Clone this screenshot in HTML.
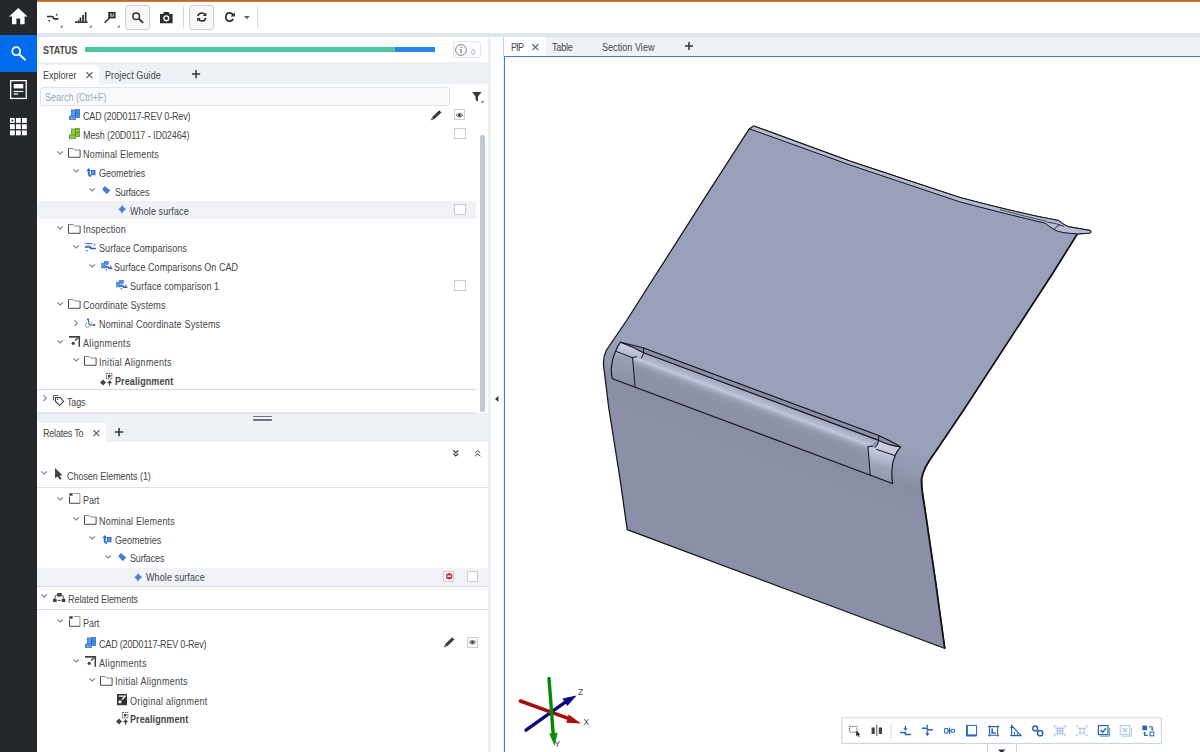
<!DOCTYPE html>
<html><head><meta charset="utf-8"><title>Inspector</title>
<style>
html,body{margin:0;padding:0;}
body{width:1200px;height:752px;overflow:hidden;position:relative;background:#eef1f6;font-family:"Liberation Sans",sans-serif;font-size:10px;color:#454545;}
div,span,svg{position:absolute;box-sizing:border-box;}
svg{overflow:visible;}
#side{left:0;top:0;width:37px;height:752px;background:#24272b;}
#side .sel{left:0;top:35px;width:37px;height:37px;background:#006cec;}
#topline{left:37px;top:0;width:1163px;height:2px;background:linear-gradient(#b55a17,#d98a4e);}
#toolbar{left:37px;top:2px;width:1163px;height:31px;background:#fff;}
#strip{left:37px;top:33px;width:1163px;height:4px;background:#dfe5ec;}
#left{left:37px;top:37px;width:451px;height:715px;background:#fff;}
#mid{left:491px;top:37px;width:12.5px;height:715px;background:#fff;}
#right{left:503px;top:37px;width:697px;height:715px;background:#eef1f6;}
.row{left:0;width:451px;height:18.9px;line-height:18.9px;white-space:nowrap;}
.t{transform:scaleX(.9);transform-origin:0 0;white-space:nowrap;line-height:12px;height:12px;}
.hl{background:#f0f2f7;width:438.6px;}
.hl2{background:#f0f2f7;}
.b{font-weight:bold;}
.tbbox{border:1px solid #c9d0da;border-radius:3px;background:#f7f8fa;}
.sep{width:1px;background:#d3d9e0;}
.tab{background:#fff;}
.cb{width:11.2px;height:11.2px;border:1px solid #cdcdcd;background:#fff;}
.hline{height:1px;background:#dde2e8;left:0;}
</style></head><body>
<div id="side"><div class="sel"></div>
<svg style="left:8.7px;top:7.5px" width="18.6" height="16.3" viewBox="0 0 18.6 16.3"><path d="M9.3 0 L18.6 8.6 H15.6 V16.3 H11.2 V10.6 H7.4 V16.3 H3 V8.6 H0 Z" fill="#fff"/></svg>
<svg style="left:11px;top:46px" width="15" height="15" viewBox="0 0 15 15"><circle cx="5.2" cy="5.2" r="4" fill="none" stroke="#fff" stroke-width="1.7"/><path d="M8.2 8.2 L14 13.8" stroke="#fff" stroke-width="2.1" stroke-linecap="round"/></svg>
<svg style="left:9.8px;top:80px" width="16.9" height="19.1" viewBox="0 0 16.9 19.1"><rect x="0.65" y="0.65" width="15.6" height="17.8" fill="none" stroke="#fff" stroke-width="1.3"/><rect x="3.7" y="4" width="9.6" height="4.4" fill="#fff"/><rect x="3.7" y="10.9" width="9.6" height="1.2" fill="#fff"/><rect x="3.7" y="13.4" width="4.5" height="1.3" fill="#fff"/></svg>
<svg style="left:9.8px;top:118px" width="16.8" height="17.3" viewBox="0 0 16.8 17.3"><g fill="#fff"><rect x="0" y="0" width="4.8" height="4.9"/><rect x="6" y="0" width="4.8" height="4.9"/><rect x="12" y="0" width="4.8" height="4.9"/><rect x="0" y="6.2" width="4.8" height="4.9"/><rect x="6" y="6.2" width="4.8" height="4.9"/><rect x="12" y="6.2" width="4.8" height="4.9"/><rect x="0" y="12.4" width="4.8" height="4.9"/><rect x="6" y="12.4" width="4.8" height="4.9"/><rect x="12" y="12.4" width="4.8" height="4.9"/></g><rect x="1.6" y="1.7" width="1.7" height="1.7" fill="#24272b"/></svg>
</div>
<div id="topline"></div>
<div id="toolbar">
<!-- icon1 compare -->
<svg style="left:9.9px;top:10.5px" width="12" height="9" viewBox="0 0 12 9"><path d="M0 3.5 H4.9 Q6 3.5 6.4 4.7 Q6.8 5.9 7.9 5.9 H11.4" fill="none" stroke="#2e2e2e" stroke-width="1.7"/><path d="M9 0.2 L10.9 2.4 H8.8 Z M0.8 7 H3 L2.6 9 Z" fill="#2e2e2e"/></svg>
<svg style="left:23.2px;top:23px" width="2.6" height="2.6" viewBox="0 0 3 3"><path d="M3 0 V3 H0 Z" fill="#555"/></svg>
<!-- icon2 bars -->
<svg style="left:38px;top:9.9px" width="12.6" height="11" viewBox="0 0 12.6 11"><path d="M0 10.2 H12.6" stroke="#2e2e2e" stroke-width="1.5"/><path d="M2 9.6 L4 7.6 V9.6 Z" fill="#2e2e2e"/><rect x="4.6" y="5.4" width="1.7" height="4.4" fill="#2e2e2e"/><rect x="7.2" y="3" width="1.7" height="6.8" fill="#2e2e2e"/><rect x="9.8" y="0" width="1.7" height="9.8" fill="#2e2e2e"/></svg>
<svg style="left:51.7px;top:23px" width="2.6" height="2.6" viewBox="0 0 3 3"><path d="M3 0 V3 H0 Z" fill="#555"/></svg>
<!-- icon3 flag -->
<svg style="left:66.5px;top:9.9px" width="11.6" height="11.4" viewBox="0 0 11.6 11.4"><rect x="4.2" y="0" width="7.4" height="6.4" fill="#2e2e2e"/><path d="M6 2.2 H8 M8.8 2.2 H10.2 M6 4 H10.2" stroke="#fff" stroke-width=".9"/><path d="M5.6 6 L0.6 10.8" stroke="#2e2e2e" stroke-width="1.5"/></svg>
<svg style="left:80px;top:23px" width="2.6" height="2.6" viewBox="0 0 3 3"><path d="M3 0 V3 H0 Z" fill="#555"/></svg>
<!-- search button -->
<div class="tbbox" style="left:88.4px;top:3.4px;width:24.2px;height:24.2px"></div>
<svg style="left:95px;top:10px" width="12" height="11.4" viewBox="0 0 12 11.4"><circle cx="4.2" cy="4.2" r="3.3" fill="none" stroke="#2e2e2e" stroke-width="1.5"/><path d="M6.6 6.6 L11.2 10.8" stroke="#2e2e2e" stroke-width="1.8"/></svg>
<!-- camera -->
<svg style="left:123px;top:9.9px" width="12.6" height="11.2" viewBox="0 0 12.6 11.2"><path d="M0 2 H3 L4 0 H8.6 L9.6 2 H12.6 V11.2 H0 Z" fill="#2e2e2e"/><circle cx="6.3" cy="6.3" r="3.1" fill="#fff"/><circle cx="6.3" cy="6.3" r="1.7" fill="#2e2e2e"/></svg>
<div class="sep" style="left:146px;top:4.2px;height:21.6px"></div>
<!-- refresh button -->
<div class="tbbox" style="left:152.4px;top:3.4px;width:24.4px;height:24.4px"></div>
<svg style="left:159.8px;top:10.4px" width="9.6" height="10" viewBox="0 0 9.6 10"><path d="M0.9 4.2 Q1.4 1 4.8 1 Q7 1 8 2.8" fill="none" stroke="#2e2e2e" stroke-width="1.6"/><path d="M9.4 0.4 V4 H5.8 Z" fill="#2e2e2e"/><path d="M8.7 5.8 Q8.2 9 4.8 9 Q2.6 9 1.6 7.2" fill="none" stroke="#2e2e2e" stroke-width="1.6"/><path d="M0.2 9.6 V6 H3.8 Z" fill="#2e2e2e"/></svg>
<!-- redo -->
<svg style="left:188px;top:10.4px" width="10" height="10" viewBox="0 0 10 10"><path d="M8.2 7 Q7 9.2 4.6 9.2 Q0.9 9.2 0.9 5 Q0.9 0.9 4.6 0.9 Q6.8 0.9 8 2.8" fill="none" stroke="#2e2e2e" stroke-width="1.7"/><path d="M9.9 0.2 V4.6 H5.6 Z" fill="#2e2e2e"/></svg>
<svg style="left:206.7px;top:13.8px" width="5.8" height="3.2" viewBox="0 0 5.8 3.2"><path d="M0 0 H5.8 L2.9 3.2 Z" fill="#5a6170"/></svg>
<div class="sep" style="left:220px;top:4.2px;height:21.6px"></div>
</div>
<div id="strip"></div>
<div id="left">
<!-- status -->
<span class="t" style="left:6px;top:8px;font-weight:bold;color:#4a4a4a;letter-spacing:-0.08px">STATUS</span>
<div style="left:48px;top:10px;width:310px;height:5px;background:#4cc6a2"></div>
<div style="left:358px;top:10px;width:39.8px;height:5px;background:#2a83ea"></div>
<div style="left:416px;top:4.4px;width:28.4px;height:16.2px;border:1px solid #e2e6ec;border-radius:2.5px;background:#fcfcfd"></div>
<svg style="left:418.2px;top:6.6px" width="12" height="12" viewBox="0 0 12 12"><circle cx="6" cy="6" r="5.4" fill="none" stroke="#777" stroke-width=".9"/><path d="M6 5 V9" stroke="#666" stroke-width="1.1"/><circle cx="6" cy="3.3" r=".75" fill="#666"/></svg>
<span class="t" style="left:433.6px;top:9px;color:#9db4cc;font-size:8.6px">0</span>
<!-- tab bar -->
<div style="left:0;top:25px;width:451px;height:22px;background:#eef1f6"></div>
<div class="tab" style="left:0;top:28.2px;width:62px;height:18.8px"></div>
<span class="t" style="left:6.4px;top:33px;letter-spacing:-0.003px">Explorer</span>
<svg style="left:48.8px;top:35.4px" width="6.8" height="6.4" viewBox="0 0 6.8 6.4"><path d="M0.4 0.3 L6.4 6.1 M6.4 0.3 L0.4 6.1" stroke="#5d6570" stroke-width="1.2"/></svg>
<span class="t" style="left:68.4px;top:33px;letter-spacing:0.117px">Project Guide</span>
<svg style="left:154.8px;top:33.2px" width="8.2" height="8.2" viewBox="0 0 8.2 8.2"><path d="M4.1 0 V8.2 M0 4.1 H8.2" stroke="#333" stroke-width="1.5"/></svg>
<!-- search -->
<div style="left:3.4px;top:50.2px;width:409.6px;height:18.8px;border:1px solid #dde2e9;border-radius:3px;background:#f8f9fb"></div>
<span class="t" style="left:7.6px;top:55px;color:#a3a9b2;letter-spacing:-0.019px">Search (Ctrl+F)</span>
<svg style="left:435px;top:55px" width="11.4" height="11" viewBox="0 0 11.4 11"><path d="M0 0 H9.6 L6 4.6 V9.6 L3.6 8 V4.6 Z" fill="#3a3a3a"/><path d="M11.4 8.2 V10.8 H8.8 Z" fill="#555"/></svg>
<!-- pencil & eye row CAD -->
<svg style="left:394px;top:72.6px" width="10.6" height="10.4" viewBox="0 0 10.6 10.4"><path d="M8.2 0.2 L10.4 2.4 L3 9.4 L0.8 7.4 Z" fill="#3a3a3a"/><path d="M0.5 8 L2.5 9.8 L0.1 10.3 Z" fill="#3a3a3a"/></svg>
<div class="cb" style="left:417.2px;top:72.2px"></div>
<svg style="left:419.4px;top:75.6px" width="7" height="4.4" viewBox="0 0 7 4.4"><path d="M0.2 2.2 Q3.5 -1.4 6.8 2.2 Q3.5 5.8 0.2 2.2 Z" fill="none" stroke="#333" stroke-width=".8"/><circle cx="3.5" cy="2.2" r="1.3" fill="#333"/></svg>
<div class="cb" style="left:417.4px;top:91.2px"></div>
<div class="cb" style="left:417.4px;top:167.2px;z-index:2"></div>
<div class="cb" style="left:417.4px;top:242.6px"></div>
<!-- scrollbar -->
<div style="left:443.4px;top:98px;width:4.4px;height:277.4px;background:#c4c9d1;border-radius:2.2px"></div>
<!-- separators -->
<div class="hline" style="top:351.8px;width:438.6px;background:#d4dae1"></div>
<!-- splitter & relates tab bar -->
<div style="left:0;top:375.5px;width:451px;height:29.2px;background:#eef1f6"></div>
<div style="left:0;top:375.3px;width:438.6px;height:1.8px;background:#e3e7ed"></div>
<div style="left:215.8px;top:378.8px;width:19.2px;height:1.5px;background:#6b7483;border-radius:.7px"></div>
<div style="left:215.8px;top:382.1px;width:19.2px;height:1.5px;background:#6b7483;border-radius:.7px"></div>
<div class="tab" style="left:0;top:385.8px;width:69px;height:19px"></div>
<span class="t" style="left:6.4px;top:391px;letter-spacing:-0.219px">Relates To</span>
<svg style="left:55.6px;top:392.6px" width="6.8" height="6.4" viewBox="0 0 6.8 6.4"><path d="M0.4 0.3 L6.4 6.1 M6.4 0.3 L0.4 6.1" stroke="#5d6570" stroke-width="1.2"/></svg>
<svg style="left:78px;top:390.6px" width="8.2" height="8.2" viewBox="0 0 8.2 8.2"><path d="M4.1 0 V8.2 M0 4.1 H8.2" stroke="#333" stroke-width="1.5"/></svg>
<!-- double chevrons -->
<svg style="left:415.8px;top:413.2px" width="5.6" height="6.6" viewBox="0 0 5.6 6.6"><path d="M0.3 0.4 L2.8 2.8 L5.3 0.4 M0.3 3.6 L2.8 6 L5.3 3.6" fill="none" stroke="#333" stroke-width="1.2"/></svg>
<svg style="left:437.8px;top:413.2px" width="5.6" height="6.6" viewBox="0 0 5.6 6.6"><path d="M0.3 3 L2.8 0.6 L5.3 3 M0.3 6.2 L2.8 3.8 L5.3 6.2" fill="none" stroke="#333" stroke-width="1"/></svg>
<div class="hline" style="top:449.6px;width:451px"></div>
<div class="hline" style="top:549px;width:451px"></div>
<div class="hline" style="top:572px;width:451px"></div>
<!-- relates row controls -->
<div class="cb" style="left:406px;top:534.2px;z-index:2;width:11.4px;height:10.6px"></div>
<svg style="left:408.6px;top:536.4px;z-index:3" width="6.4" height="6.4" viewBox="0 0 6.4 6.4"><circle cx="3.2" cy="3.2" r="3.2" fill="#c8333d"/><rect x="1.4" y="2.5" width="3.6" height="1.4" fill="#fff"/></svg>
<div class="cb" style="left:429.8px;top:534.2px;z-index:2;height:10.6px"></div>
<svg style="left:406.8px;top:600px" width="10.6" height="10.4" viewBox="0 0 10.6 10.4"><path d="M8.2 0.2 L10.4 2.4 L3 9.4 L0.8 7.4 Z" fill="#3a3a3a"/><path d="M0.5 8 L2.5 9.8 L0.1 10.3 Z" fill="#3a3a3a"/></svg>
<div class="cb" style="left:429.8px;top:600px;height:10.8px"></div>
<svg style="left:432px;top:603.2px" width="7" height="4.4" viewBox="0 0 7 4.4"><path d="M0.2 2.2 Q3.5 -1.4 6.8 2.2 Q3.5 5.8 0.2 2.2 Z" fill="none" stroke="#333" stroke-width=".8"/><circle cx="3.5" cy="2.2" r="1.3" fill="#333"/></svg>
<div style="left:0;top:163.9px;width:438.6px;height:17.7px;background:#f0f2f7"></div>
<div style="left:0;top:530.7px;width:451px;height:18.3px;background:#f0f2f7"></div>
<svg style="left:32px;top:72.25px" width="11" height="11" viewBox="0 0 11 11"><rect x="2.3" y="1" width="4.4" height="6" fill="#5d9cea" stroke="#2f6cc6" stroke-width=".7"/><rect x="6.5" y="0.4" width="4.1" height="3.9" fill="#4d8ce0" stroke="#2f6cc6" stroke-width=".7"/><rect x="6.7" y="4.3" width="4" height="4.1" fill="#4d8ce0" stroke="#2f6cc6" stroke-width=".7"/><rect x="0.4" y="7" width="6.2" height="3.7" fill="#5d9cea" stroke="#2f6cc6" stroke-width=".7"/></svg><span class="t" style="left:45.9px;top:74px;letter-spacing:-0.197px">CAD (20D0117-REV 0-Rev)</span>
<svg style="left:32px;top:91.35px" width="11" height="11" viewBox="0 0 11 11"><rect x="2.3" y="1" width="4.4" height="6" fill="#94cf48" stroke="#4f8e22" stroke-width=".7"/><rect x="6.5" y="0.4" width="4.1" height="3.9" fill="#86c43c" stroke="#4f8e22" stroke-width=".7"/><rect x="6.7" y="4.3" width="4" height="4.1" fill="#86c43c" stroke="#4f8e22" stroke-width=".7"/><rect x="0.4" y="7" width="6.2" height="3.7" fill="#94cf48" stroke="#4f8e22" stroke-width=".7"/></svg><span class="t" style="left:45.9px;top:93px;letter-spacing:-0.092px">Mesh (20D0117 - ID02464)</span>
<svg style="left:20.1px;top:113.55px" width="6.4" height="3.7" viewBox="0 0 6.4 3.7"><path d="M0.4 0.4 L3.2 3.1 L6 0.4" fill="none" stroke="#6e7886" stroke-width="1.05"/></svg><svg style="left:31.3px;top:111.05px" width="12.6" height="9.8" viewBox="0 0 12.6 9.8"><path d="M0.5 0.5 H5 L6.6 2 H12.1" fill="none" stroke="#8a8a8a" stroke-width="1"/><path d="M0.5 0.5 V9.3 H12.1 V2" fill="none" stroke="#454545" stroke-width="1"/></svg><span class="t" style="left:45.9px;top:112px;letter-spacing:0.206px">Nominal Elements</span>
<svg style="left:35.7px;top:132.45px" width="6.4" height="3.7" viewBox="0 0 6.4 3.7"><path d="M0.4 0.4 L3.2 3.1 L6 0.4" fill="none" stroke="#6e7886" stroke-width="1.05"/></svg><svg style="left:48.8px;top:130.5px" width="9.4" height="9.4" viewBox="0 0 9.4 9.4"><path d="M2.9 0 L5 3 H3.7 V5.2 Q3.7 6.8 5.2 7.4 L4.4 9.2 Q1.7 8.2 1.7 5.2 V3 H0.3 Z" fill="#2f6ec8"/><rect x="5.4" y="2.4" width="3.6" height="4.4" fill="#5b95e6" stroke="#2a62be" stroke-width=".9"/></svg><span class="t" style="left:61.6px;top:131px;letter-spacing:-0.03px">Geometries</span>
<svg style="left:51.6px;top:151.35px" width="6.4" height="3.7" viewBox="0 0 6.4 3.7"><path d="M0.4 0.4 L3.2 3.1 L6 0.4" fill="none" stroke="#6e7886" stroke-width="1.05"/></svg><svg style="left:64.9px;top:149.4px" width="8.4" height="8.4" viewBox="0 0 8.4 8.4"><path d="M2.7 0.1 L8.3 4.6 L4.8 8.3 L0.1 3.3 Z" fill="#4a82d4"/><path d="M4.5 1.6 L2.1 5.2 M6.4 3.2 L3.8 6.9" stroke="#356cc2" stroke-width=".6"/></svg><span class="t" style="left:77.5px;top:150px;letter-spacing:-0.177px">Surfaces</span>
<svg style="left:80.8px;top:168.3px" width="8.2" height="8.4" viewBox="0 0 8.2 8.4"><path d="M4.2 0 Q5.2 2.6 8.2 4.2 Q5.4 5.4 3.9 8.4 Q2.8 5.6 0 4.2 Q2.8 3 4.2 0 Z" fill="#4a82d4"/></svg><span class="t" style="left:93.1px;top:169px;letter-spacing:0.104px">Whole surface</span>
<svg style="left:20.1px;top:189.15px" width="6.4" height="3.7" viewBox="0 0 6.4 3.7"><path d="M0.4 0.4 L3.2 3.1 L6 0.4" fill="none" stroke="#6e7886" stroke-width="1.05"/></svg><svg style="left:31.3px;top:186.65px" width="12.6" height="9.8" viewBox="0 0 12.6 9.8"><path d="M0.5 0.5 H5 L6.6 2 H12.1" fill="none" stroke="#8a8a8a" stroke-width="1"/><path d="M0.5 0.5 V9.3 H12.1 V2" fill="none" stroke="#454545" stroke-width="1"/></svg><span class="t" style="left:45.9px;top:187px;letter-spacing:0.207px">Inspection</span>
<svg style="left:35.9px;top:208.05px" width="6.4" height="3.7" viewBox="0 0 6.4 3.7"><path d="M0.4 0.4 L3.2 3.1 L6 0.4" fill="none" stroke="#6e7886" stroke-width="1.05"/></svg><svg style="left:48px;top:205.05px" width="10.8" height="9.9" viewBox="0 0 10.8 9.9"><path d="M0.2 1.6 H7.6" stroke="#2a5cb2" stroke-width=".9" fill="none"/><path d="M1.4 3.4 H5" stroke="#7ea3dc" stroke-width=".7" fill="none"/><path d="M0 5.1 H5.6 V6.6 H10.8" fill="none" stroke="#2a5cb2" stroke-width="1.5"/><path d="M9 1.4 L10.7 3.6 H8.8 Z" fill="#2a5cb2"/><path d="M0.6 8 H2.8 L2 9.8 Z" fill="#2a5cb2"/></svg><span class="t" style="left:61.5px;top:206px;letter-spacing:0.079px">Surface Comparisons</span>
<svg style="left:51.6px;top:226.95px" width="6.4" height="3.7" viewBox="0 0 6.4 3.7"><path d="M0.4 0.4 L3.2 3.1 L6 0.4" fill="none" stroke="#6e7886" stroke-width="1.05"/></svg><svg style="left:63.6px;top:224.35px" width="11.6" height="10.2" viewBox="0 0 11.6 10.2"><rect x="0.6" y="2.2" width="3.2" height="4.8" fill="#5a9aec" stroke="#2f6cc6" stroke-width=".5"/><rect x="3.4" y="0.3" width="4" height="3.2" fill="#4a8ae2" stroke="#2f6cc6" stroke-width=".5"/><rect x="3.8" y="3.5" width="2.6" height="1.6" fill="#7fb2f2"/><path d="M4 5.9 H7.2 L7.8 7.2 H11.4" fill="none" stroke="#2a5cb2" stroke-width="1.5"/><path d="M8.6 6.2 L9.8 4.4 L10.8 6.2 Z" fill="#2a5cb2"/><path d="M4.4 8 H6 L5.2 10.1 Z" fill="#2a5cb2"/></svg><span class="t" style="left:77.4px;top:225px;letter-spacing:0.07px">Surface Comparisons On CAD</span>
<svg style="left:79.2px;top:242.75px" width="11.6" height="10.2" viewBox="0 0 11.6 10.2"><rect x="0.6" y="2.2" width="3.2" height="4.8" fill="#5a9aec" stroke="#2f6cc6" stroke-width=".5"/><rect x="3.4" y="0.3" width="4" height="3.2" fill="#4a8ae2" stroke="#2f6cc6" stroke-width=".5"/><rect x="3.8" y="3.5" width="2.6" height="1.6" fill="#7fb2f2"/><path d="M4 5.9 H7.2 L7.8 7.2 H11.4" fill="none" stroke="#2a5cb2" stroke-width="1.5"/><path d="M8.6 6.2 L9.8 4.4 L10.8 6.2 Z" fill="#2a5cb2"/><path d="M4.4 8 H6 L5.2 10.1 Z" fill="#2a5cb2"/></svg><span class="t" style="left:93px;top:244px;letter-spacing:0.091px">Surface comparison 1</span>
<svg style="left:20.1px;top:264.75px" width="6.4" height="3.7" viewBox="0 0 6.4 3.7"><path d="M0.4 0.4 L3.2 3.1 L6 0.4" fill="none" stroke="#6e7886" stroke-width="1.05"/></svg><svg style="left:31.3px;top:262.05px" width="12.6" height="9.8" viewBox="0 0 12.6 9.8"><path d="M0.5 0.5 H5 L6.6 2 H12.1" fill="none" stroke="#8a8a8a" stroke-width="1"/><path d="M0.5 0.5 V9.3 H12.1 V2" fill="none" stroke="#454545" stroke-width="1"/></svg><span class="t" style="left:45.9px;top:263px;letter-spacing:0.09px">Coordinate Systems</span>
<svg style="left:37.4px;top:282.6px" width="3.8" height="6.4" viewBox="0 0 3.8 6.4"><path d="M0.5 0.4 L3.2 3.2 L0.5 6" fill="none" stroke="#6e7886" stroke-width="1.05"/></svg><svg style="left:47.9px;top:281.1px" width="10.8" height="10.2" viewBox="0 0 10.8 10.2"><path d="M2.8 0.6 L4.4 7 H9.6" fill="none" stroke="#2a5cb2" stroke-width="1.1"/><path d="M8.6 5.4 L10.8 7 L8.6 8.6 Z" fill="#2a5cb2"/><path d="M1.8 2.2 L3 0 L4.2 1.8 Z" fill="#2a5cb2"/><path d="M2 4.8 Q-0.4 6.8 1.4 9 Q2.6 10 4 8.2" fill="none" stroke="#2a5cb2" stroke-width="1" stroke-dasharray="1.3 .9"/><circle cx="6.6" cy="5" r=".6" fill="#2a5cb2"/></svg><span class="t" style="left:61.7px;top:282px;letter-spacing:0.201px">Nominal Coordinate Systems</span>
<svg style="left:20.0px;top:302.55px" width="6.4" height="3.7" viewBox="0 0 6.4 3.7"><path d="M0.4 0.4 L3.2 3.1 L6 0.4" fill="none" stroke="#6e7886" stroke-width="1.05"/></svg><svg style="left:32px;top:299.0px" width="11.1" height="10.9" viewBox="0 0 11.1 10.9"><path d="M0 0.85 H11.1" stroke="#404040" stroke-width="1.7"/><path d="M10.3 0.2 V10.9" stroke="#404040" stroke-width="1.5"/><path d="M6 4.6 L9.6 1.6" stroke="#404040" stroke-width="1.3"/><circle cx="4.2" cy="7.3" r="1.6" fill="#404040"/></svg><span class="t" style="left:46.1px;top:301px;letter-spacing:0.353px">Alignments</span>
<svg style="left:35.8px;top:321.45px" width="6.4" height="3.7" viewBox="0 0 6.4 3.7"><path d="M0.4 0.4 L3.2 3.1 L6 0.4" fill="none" stroke="#6e7886" stroke-width="1.05"/></svg><svg style="left:47.2px;top:319.15px" width="12.6" height="9.8" viewBox="0 0 12.6 9.8"><path d="M0.5 0.5 H5 L6.6 2 H12.1" fill="none" stroke="#8a8a8a" stroke-width="1"/><path d="M0.5 0.5 V9.3 H12.1 V2" fill="none" stroke="#454545" stroke-width="1"/></svg><span class="t" style="left:61.6px;top:320px;letter-spacing:0.331px">Initial Alignments</span>
<svg style="left:63px;top:335.9px" width="12.6" height="12.6" viewBox="0 0 12.6 12.6"><rect x="6.5" y="0.5" width="5.4" height="5.4" fill="none" stroke="#3a3a3a" stroke-width=".9" stroke-dasharray="1.4 .9"/><rect x="8" y="2" width="2.4" height="2.4" fill="#3a3a3a"/><path d="M3 6.5 L6 9.5 L3 12.5 L0 9.5 Z" fill="#404040"/><path d="M9.6 7 L11.2 9.2 L12.6 9.6 L11.2 10.2 H10.2 V12.6 H9 V10.2 H8 L6.6 9.6 L8 9.2 Z" fill="#404040"/></svg><span class="t b" style="left:77.8px;top:339px;letter-spacing:0.118px">Prealignment</span>
<svg style="left:5.8px;top:358.4px" width="3.8" height="6.4" viewBox="0 0 3.8 6.4"><path d="M0.5 0.4 L3.2 3.2 L0.5 6" fill="none" stroke="#6e7886" stroke-width="1.05"/></svg><svg style="left:16.2px;top:358.1px" width="11.1" height="10.8" viewBox="0 0 11.1 10.8"><path d="M0.5 5.4 V0.5 H5.4" fill="none" stroke="#4a4a4a" stroke-width=".9"/><path d="M2.4 2.4 H7.4 L10.6 6.4 L6.6 10.3 L2.4 6.2 Z" fill="#fff" stroke="#383838" stroke-width="1.05"/><circle cx="4.5" cy="4.3" r=".75" fill="#383838"/></svg><span class="t" style="left:30.4px;top:360px;letter-spacing:-0.198px">Tags</span>
<svg style="left:4.4px;top:433.5px" width="6.4" height="3.7" viewBox="0 0 6.4 3.7"><path d="M0.4 0.4 L3.2 3.1 L6 0.4" fill="none" stroke="#6e7886" stroke-width="1.05"/></svg><svg style="left:18px;top:431.3px" width="7.5" height="11.7" viewBox="0 0 7.5 11.7"><path d="M0 0 L7.5 7.2 L4.5 7.5 L6.6 10.8 L5.1 11.7 L2.4 8.4 L0 10.5 Z" fill="#444"/></svg><span class="t" style="left:30.4px;top:434px;letter-spacing:-0.043px">Chosen Elements (1)</span>
<svg style="left:20.2px;top:459.5px" width="6.4" height="3.7" viewBox="0 0 6.4 3.7"><path d="M0.4 0.4 L3.2 3.1 L6 0.4" fill="none" stroke="#6e7886" stroke-width="1.05"/></svg><svg style="left:31.8px;top:455.9px" width="11.4" height="10.8" viewBox="0 0 11.4 10.8"><path d="M4.6 0.5 H10.9 V10.3" fill="none" stroke="#9a9a9a" stroke-width="1"/><path d="M0.5 3.4 V10.3 H10.9" fill="none" stroke="#454545" stroke-width="1"/><rect x="0.3" y="0.3" width="3.3" height="2.4" fill="#3a3a3a"/></svg><span class="t" style="left:45.9px;top:458px;letter-spacing:-0.072px">Part</span>
<svg style="left:35.8px;top:480.3px" width="6.4" height="3.7" viewBox="0 0 6.4 3.7"><path d="M0.4 0.4 L3.2 3.1 L6 0.4" fill="none" stroke="#6e7886" stroke-width="1.05"/></svg><svg style="left:47.2px;top:478.2px" width="12.6" height="9.8" viewBox="0 0 12.6 9.8"><path d="M0.5 0.5 H5 L6.6 2 H12.1" fill="none" stroke="#8a8a8a" stroke-width="1"/><path d="M0.5 0.5 V9.3 H12.1 V2" fill="none" stroke="#454545" stroke-width="1"/></svg><span class="t" style="left:61.9px;top:479px;letter-spacing:0.206px">Nominal Elements</span>
<svg style="left:51.8px;top:499.4px" width="6.4" height="3.7" viewBox="0 0 6.4 3.7"><path d="M0.4 0.4 L3.2 3.1 L6 0.4" fill="none" stroke="#6e7886" stroke-width="1.05"/></svg><svg style="left:64.8px;top:497.6px" width="9.4" height="9.4" viewBox="0 0 9.4 9.4"><path d="M2.9 0 L5 3 H3.7 V5.2 Q3.7 6.8 5.2 7.4 L4.4 9.2 Q1.7 8.2 1.7 5.2 V3 H0.3 Z" fill="#2f6ec8"/><rect x="5.4" y="2.4" width="3.6" height="4.4" fill="#5b95e6" stroke="#2a62be" stroke-width=".9"/></svg><span class="t" style="left:77.8px;top:498px;letter-spacing:-0.03px">Geometries</span>
<svg style="left:67.6px;top:518.0px" width="6.4" height="3.7" viewBox="0 0 6.4 3.7"><path d="M0.4 0.4 L3.2 3.1 L6 0.4" fill="none" stroke="#6e7886" stroke-width="1.05"/></svg><svg style="left:80.6px;top:516.3px" width="8.4" height="8.4" viewBox="0 0 8.4 8.4"><path d="M2.7 0.1 L8.3 4.6 L4.8 8.3 L0.1 3.3 Z" fill="#4a82d4"/><path d="M4.5 1.6 L2.1 5.2 M6.4 3.2 L3.8 6.9" stroke="#356cc2" stroke-width=".6"/></svg><span class="t" style="left:93.2px;top:516px;letter-spacing:-0.177px">Surfaces</span>
<svg style="left:96.7px;top:535.5px" width="8.2" height="8.4" viewBox="0 0 8.2 8.4"><path d="M4.2 0 Q5.2 2.6 8.2 4.2 Q5.4 5.4 3.9 8.4 Q2.8 5.6 0 4.2 Q2.8 3 4.2 0 Z" fill="#4a82d4"/></svg><span class="t" style="left:108.6px;top:535px;letter-spacing:0.104px">Whole surface</span>
<svg style="left:4.4px;top:556.6px" width="6.4" height="3.7" viewBox="0 0 6.4 3.7"><path d="M0.4 0.4 L3.2 3.1 L6 0.4" fill="none" stroke="#6e7886" stroke-width="1.05"/></svg><svg style="left:15.9px;top:556.2px" width="12.3" height="9" viewBox="0 0 12.3 9"><rect x="4.2" y="0" width="4.5" height="3.6" fill="#404040"/><rect x="0" y="5.7" width="3.6" height="3.3" fill="#404040"/><rect x="8.7" y="5.7" width="3.6" height="3.3" fill="#404040"/><path d="M1.8 5.7 Q1.8 1.8 4.2 1.8 M8.7 1.8 Q10.5 1.8 10.5 5.7" fill="none" stroke="#404040" stroke-width=".9"/><path d="M4.6 7.4 H7.8" stroke="#404040" stroke-width="1"/></svg><span class="t" style="left:30.6px;top:557px;letter-spacing:-0.072px">Related Elements</span>
<svg style="left:20.2px;top:582.45px" width="6.4" height="3.7" viewBox="0 0 6.4 3.7"><path d="M0.4 0.4 L3.2 3.1 L6 0.4" fill="none" stroke="#6e7886" stroke-width="1.05"/></svg><svg style="left:31.8px;top:578.75px" width="11.4" height="10.8" viewBox="0 0 11.4 10.8"><path d="M4.6 0.5 H10.9 V10.3" fill="none" stroke="#9a9a9a" stroke-width="1"/><path d="M0.5 3.4 V10.3 H10.9" fill="none" stroke="#454545" stroke-width="1"/><rect x="0.3" y="0.3" width="3.3" height="2.4" fill="#3a3a3a"/></svg><span class="t" style="left:45.9px;top:581px;letter-spacing:-0.072px">Part</span>
<svg style="left:48px;top:599.95px" width="11" height="11" viewBox="0 0 11 11"><rect x="2.3" y="1" width="4.4" height="6" fill="#5d9cea" stroke="#2f6cc6" stroke-width=".7"/><rect x="6.5" y="0.4" width="4.1" height="3.9" fill="#4d8ce0" stroke="#2f6cc6" stroke-width=".7"/><rect x="6.7" y="4.3" width="4" height="4.1" fill="#4d8ce0" stroke="#2f6cc6" stroke-width=".7"/><rect x="0.4" y="7" width="6.2" height="3.7" fill="#5d9cea" stroke="#2f6cc6" stroke-width=".7"/></svg><span class="t" style="left:61.9px;top:602px;letter-spacing:-0.197px">CAD (20D0117-REV 0-Rev)</span>
<svg style="left:35.8px;top:622.4px" width="6.4" height="3.7" viewBox="0 0 6.4 3.7"><path d="M0.4 0.4 L3.2 3.1 L6 0.4" fill="none" stroke="#6e7886" stroke-width="1.05"/></svg><svg style="left:48px;top:618.9px" width="11.1" height="10.9" viewBox="0 0 11.1 10.9"><path d="M0 0.85 H11.1" stroke="#404040" stroke-width="1.7"/><path d="M10.3 0.2 V10.9" stroke="#404040" stroke-width="1.5"/><path d="M6 4.6 L9.6 1.6" stroke="#404040" stroke-width="1.3"/><circle cx="4.2" cy="7.3" r="1.6" fill="#404040"/></svg><span class="t" style="left:61.9px;top:621px;letter-spacing:0.353px">Alignments</span>
<svg style="left:51.8px;top:641.1px" width="6.4" height="3.7" viewBox="0 0 6.4 3.7"><path d="M0.4 0.4 L3.2 3.1 L6 0.4" fill="none" stroke="#6e7886" stroke-width="1.05"/></svg><svg style="left:62.9px;top:638.6px" width="12.6" height="9.8" viewBox="0 0 12.6 9.8"><path d="M0.5 0.5 H5 L6.6 2 H12.1" fill="none" stroke="#8a8a8a" stroke-width="1"/><path d="M0.5 0.5 V9.3 H12.1 V2" fill="none" stroke="#454545" stroke-width="1"/></svg><span class="t" style="left:77.8px;top:639px;letter-spacing:0.331px">Initial Alignments</span>
<svg style="left:80px;top:656.75px" width="10" height="11.2" viewBox="0 0 10 11.2"><rect x="0" y="0" width="10" height="11.2" fill="#333"/><path d="M1.8 2.2 H8.2 L5 5.6" fill="none" stroke="#fff" stroke-width="1.3"/><circle cx="3" cy="7.8" r="1.6" fill="#fff"/></svg><span class="t" style="left:93.2px;top:659px;letter-spacing:0.306px">Original alignment</span>
<svg style="left:79px;top:674.9px" width="12.6" height="12.6" viewBox="0 0 12.6 12.6"><rect x="6.5" y="0.5" width="5.4" height="5.4" fill="none" stroke="#3a3a3a" stroke-width=".9" stroke-dasharray="1.4 .9"/><rect x="8" y="2" width="2.4" height="2.4" fill="#3a3a3a"/><path d="M3 6.5 L6 9.5 L3 12.5 L0 9.5 Z" fill="#404040"/><path d="M9.6 7 L11.2 9.2 L12.6 9.6 L11.2 10.2 H10.2 V12.6 H9 V10.2 H8 L6.6 9.6 L8 9.2 Z" fill="#404040"/></svg><span class="t b" style="left:93.2px;top:677px;letter-spacing:0.118px">Prealignment</span>
</div>
<div id="mid"><svg style="left:4.2px;top:358.6px" width="3.4" height="5.8" viewBox="0 0 3.4 5.8"><path d="M3.4 0 V5.8 L0 2.9 Z" fill="#2e2e2e"/></svg></div>
<div id="right">
<div style="left:0;top:0;width:1px;height:19px;background:#c9d0d8"></div>
<div class="tab" style="left:1px;top:0;width:42px;height:19px"></div>
<span class="t" style="left:7.6px;top:5px;letter-spacing:-0.838px">PIP</span>
<svg style="left:28.8px;top:6.6px" width="6.8" height="6.4" viewBox="0 0 6.8 6.4"><path d="M0.4 0.3 L6.4 6.1 M6.4 0.3 L0.4 6.1" stroke="#5d6570" stroke-width="1.2"/></svg>
<span class="t" style="left:49.4px;top:5px;letter-spacing:-0.181px">Table</span>
<span class="t" style="left:98.6px;top:5px;letter-spacing:0.058px">Section View</span>
<svg style="left:182px;top:4.8px" width="8" height="8" viewBox="0 0 8 8"><path d="M4 0 V8 M0 4 H8" stroke="#333" stroke-width="1.5"/></svg>
<div id="view" style="left:1px;top:19px;width:696px;height:696px;background:#fff;border-left:1.3px solid #2a7de1;border-top:1.3px solid #2a7de1"></div>
<svg style="left:-503px;top:-37px" width="1200" height="752" viewBox="0 0 1200 752">
<defs>
<linearGradient id="gbend" gradientUnits="userSpaceOnUse" x1="772" y1="396" x2="750" y2="456">
<stop offset="0" stop-color="#9aa0b9"/><stop offset=".35" stop-color="#9399b1"/><stop offset=".6" stop-color="#888da5"/><stop offset="1" stop-color="#8b90a8"/></linearGradient>
<linearGradient id="gfeat" gradientUnits="userSpaceOnUse" x1="690" y1="370" x2="677.7" y2="403.2">
<stop offset="0" stop-color="#a3a8c0"/><stop offset=".12" stop-color="#adb2ca"/><stop offset=".22" stop-color="#bdc2db"/><stop offset=".27" stop-color="#b3b8d1"/><stop offset=".34" stop-color="#9ea3bc"/><stop offset=".45" stop-color="#9095ad"/><stop offset=".6" stop-color="#8c91a9"/><stop offset="1" stop-color="#8c91a8"/></linearGradient>
<linearGradient id="gcapl" gradientUnits="userSpaceOnUse" x1="624" y1="347" x2="616" y2="380">
<stop offset="0" stop-color="#c6cbe0"/><stop offset=".2" stop-color="#b2b7cf"/><stop offset=".3" stop-color="#9a9fb8"/><stop offset="1" stop-color="#8c91a9"/></linearGradient>
<linearGradient id="gcapr" gradientUnits="userSpaceOnUse" x1="884" y1="450" x2="876" y2="480">
<stop offset="0" stop-color="#c8cce1"/><stop offset=".3" stop-color="#b4b9d1"/><stop offset=".55" stop-color="#9da2bb"/><stop offset="1" stop-color="#9398b0"/></linearGradient>
</defs>
<!-- body silhouette -->
<path id="sil" d="M753.7 126 L850 161.2 L960 197.5 Q1020 213.5 1058.7 220.6 Q1063 224.5 1068 226.6 L1089.6 230.4 Q1092.4 231.8 1089.6 233.2 L1077.5 233.9 L1052.5 273.7 L963.7 410 L935 452.5 Q923.2 468 921.9 479 Q921.6 488 924.4 503.7 L935.6 580 L945 648.5 L627.2 529.7 L620.2 480 L608.7 407.5 L603.6 366 Q602.8 357.5 606.2 350.5 L626.9 320 L707.5 193.7 L749.4 128.7 Z" fill="url(#gbend)" stroke="#14141a" stroke-width="1.25" stroke-linejoin="round"/>
<path d="M1077 234.4 L1052.3 274 L963.5 410.3 L934.6 453 Q923 468.4 921.4 479 Q921.1 488 924 503.8 L935.2 580 L944.6 648" fill="none" stroke="#14141a" stroke-width="1.6" stroke-linejoin="round"/>
<!-- top thickness strip -->
<path d="M753.7 126 L850 161.2 L960 197.5 Q1020 213.5 1058.7 220.6 Q1063 224.5 1068 226.6 L1089.6 230.4 Q1092.4 231.8 1089.6 233.2 L1077.5 233.9 Q1060 233 1055 230 Q1048 226 1045 223.1 Q1010 215 960 201.9 L850 165 L750 129 Z" fill="#b7bcd3" stroke="#15151c" stroke-width="1" stroke-linejoin="round"/>
<path d="M1000 209.6 Q1025 216.6 1047 221.4" fill="none" stroke="#14141a" stroke-width=".7"/>
<path d="M1047 222 Q1056 223 1064 226.4 M1054 229.4 Q1056 226.6 1059.6 225" fill="none" stroke="#15151c" stroke-width=".8"/>
<!-- feature -->
<path d="M620.6 342.2 L643.7 348 L878.7 435.5 Q892 441.5 900.6 446.9 Q897 451 895 455.6 Q892 463 891.9 470 Q891.6 477 892.5 483.5 L612.5 378.7 Q611 374 611.3 369 Q612 359 615.6 351.2 Q617.6 346 620.6 342.2 Z" fill="#8c91a9"/>
<path d="M643.5 352.7 L878.7 440.4 L868 446.9 L870.2 475 L635 386.2 L632.5 357.5 Z" fill="url(#gfeat)"/>
<path d="M620.6 342.2 Q617.6 346 615.6 351.2 Q612 359 611.3 369 Q611 374 612.5 378.7 L635 386.2 L632.5 357.5 L641.5 356 Q644 354 643.5 352.7 Q632 346.5 620.6 342.2 Z" fill="url(#gcapl)"/>
<path d="M868 446.9 L876 447 Q879 444 878.7 440.4 Q888 445 900.6 446.9 Q897 451 895 455.6 Q892 463 891.9 470 Q891.6 477 892.5 483.5 L870.2 475 Z" fill="url(#gcapr)"/>
<path d="M620.6 342.2 L643.7 348 L878.7 435.5 Q892 441.5 900.6 446.9 Q888 445 878.7 440.4 L643.5 352.7 Q632 346.5 620.6 342.2 Z" fill="#8a8fa6"/>
<g fill="none" stroke="#14141a" stroke-width="1.15" stroke-linejoin="round" stroke-linecap="round">
<path d="M620.6 342.2 L643.7 348 L878.7 435.5 Q892 441.5 900.6 446.9 Q897 451 895 455.6 Q892 463 891.9 470 Q891.6 477 892.5 483.5 L612.5 378.7 Q611 374 611.3 369 Q612 359 615.6 351.2 Q617.6 346 620.6 342.2 Z"/>
<path d="M620.6 342.2 Q632 346.5 643.5 352.7 L878.7 440.4 Q888 445 900.6 446.9"/>
<path d="M643.7 348 Q644.6 353 641.6 358 M632.5 357.5 Q634 356.6 636.4 356.8 M632.5 357.5 L635 386.2 M615.6 351.2 L632 357.6" stroke-width="1"/>
<path d="M878.7 435.5 Q879.6 444 875 447.6 M868 446.9 Q870 446 872.4 446.4 M868 446.9 L870.2 475 M876.6 449.4 L895 455.6" stroke-width="1"/>
</g>
<path d="M637 359 L866 444.2" stroke="#d8dcec" stroke-width=".8" stroke-dasharray="1.2 1.4" fill="none" opacity=".85"/>
<!-- axes triad -->
<g stroke-linecap="round">
<path d="M526 730.2 L566 701.6" stroke="#06067e" stroke-width="3.3"/>
<path d="M562.4 698.6 L576.6 695.4 L567.4 706 Z" fill="#0a0a8c"/>
<path d="M520.4 701 L571 719.4" stroke="#a60d0d" stroke-width="3.5"/>
<path d="M568.6 714.6 L581 723.6 L566.2 722.8 Z" fill="#b01010"/>
<path d="M549 678.4 L553.2 734" stroke="#0a860a" stroke-width="3.4"/>
<path d="M549.2 733.4 L557.6 732.8 L554.6 746 Z" fill="#0c900c"/>
</g>
<g font-family="Liberation Sans, sans-serif" font-size="8.4" fill="#444" letter-spacing="0">
<text x="578" y="695">Z</text><text x="583.6" y="724.6">X</text><text x="554.6" y="747.4">Y</text></g>
<!-- bottom toolbar -->
<rect x="841.8" y="717.8" width="319.6" height="25.6" fill="#fff" stroke="#c7d2e0" stroke-width="1"/>
<rect x="987.6" y="743.6" width="28.8" height="10" fill="#fff" stroke="#c7d2e0" stroke-width="1"/>
<path d="M998 749.6 H1005.4 L1001.7 753.4 Z" fill="#333"/>
<path d="M890.9 723.4 V738" stroke="#d5dce6" stroke-width="1"/>
<g id="bt" fill="none" stroke="#2565b8" stroke-width="1.3">
<!-- 1 select -->
<rect x="849.4" y="726.4" width="7.6" height="5.8" stroke="#444" stroke-width=".9" stroke-dasharray="1.4 1"/>
<path d="M856.2 730.8 L860.6 734.4 L858.6 734.6 L859.6 736.6 L858.6 737 L857.6 735 L856.2 736.2 Z" fill="#222" stroke="none"/>
<!-- 2 -->
<path d="M873.2 727.4 V734 M880.4 727.4 V734" stroke="#444" stroke-width="3.2"/><path d="M876.8 724.8 V736.2" stroke="#444" stroke-width=".9"/>
<!-- 3 -->
<path d="M900 732.4 H905.4 V734.6 H910.8" stroke-width="1.5"/><path d="M905.4 725.8 V729" stroke-width="1.3"/><path d="M903.2 728.2 H907.6 L905.4 730.8 Z" fill="#2565b8" stroke="none"/>
<!-- 4 -->
<path d="M922 728.2 H927.4 V729.8 H932.8" stroke-width="1.5"/><path d="M927.4 724.8 V727.4 M927.4 730.8 V734" stroke-width="1.3"/><path d="M925.2 733.2 H929.6 L927.4 736 Z" fill="#2565b8" stroke="none"/>
<!-- 5 -->
<path d="M944.6 728.6 H948 V733 H944.6 Z M948 730.7 H951 M949.6 727.6 V734 M951 729.4 H954.4 V732.2 H951 Z" stroke-width="1"/>
<!-- 6 -->
<path d="M966.8 725.4 H976.6 V735.4 H966.8 Z" stroke-width="1"/><path d="M966.9 725.4 V735.5 H976.6" stroke-width="1.8"/>
<!-- 7 -->
<path d="M988 726.6 H999.2 M988 735.2 H999.2 M989.6 725.4 V736.4 M997.6 725.4 V736.4" stroke-width="1.1"/><path d="M992.2 728.6 V733 H995.8" stroke-width="1.6"/>
<!-- 8 -->
<path d="M1011.6 725.6 V735.6 H1021 Z" stroke-width="1.2"/><path d="M1010.2 727.4 H1013.4 M1014.6 731.6 V735.6 M1017.4 733.4 V735.6 M1010.2 735.6 H1011.6" stroke-width="1"/>
<!-- 9 -->
<circle cx="1035.2" cy="728.4" r="2.4" stroke-width="1.5"/><circle cx="1040.2" cy="733.2" r="2.6" stroke-width="1.5"/>
<!-- 10 light -->
<g stroke="#9dbbe0" stroke-width=".9"><path d="M1054.4 727.8 V725.8 H1056.4 M1063.4 725.8 H1065.4 V727.8 M1065.4 733.8 V735.8 H1063.4 M1056.4 735.8 H1054.4 V733.8"/><path d="M1055.6 728.4 H1064.4 M1055.6 730.8 H1064.4 M1055.6 733.2 H1064.4 M1057.6 726.6 V735 M1060 726.6 V735 M1062.4 726.6 V735"/></g>
<!-- 11 light -->
<g stroke="#9dbbe0" stroke-width=".9"><path d="M1076.8 727.4 V725.8 H1078.6 M1085.4 725.8 H1087.2 V727.4 M1087.2 734.2 V735.8 H1085.4 M1078.6 735.8 H1076.8 V734.2"/><path d="M1078.4 728.6 H1085.6 M1078.4 733 H1085.6 M1080 727 V734.6 M1084 727 V734.6"/></g>
<!-- 12 -->
<path d="M1100 736.2 H1109.6 V728" stroke-width="1" stroke="#6f98d2"/><rect x="1098.4" y="725.6" width="9.6" height="9" stroke-width="1.2" fill="#fff"/><path d="M1100.6 730 L1102.6 732.2 L1106 728.2" stroke-width="1.5"/>
<!-- 13 light -->
<g stroke="#a9c2e3"><path d="M1121.6 736.2 H1131.4 V728" stroke-width=".9"/><rect x="1120.2" y="725.6" width="9.6" height="9" stroke-width="1" fill="#fff"/><path d="M1122.8 727.8 L1127.2 732.4 M1127.2 727.8 L1122.8 732.4" stroke-width="1.2"/></g>
<!-- 14 -->
<rect x="1142.4" y="725.6" width="4.6" height="4.6" fill="#2565b8" stroke="none"/><rect x="1150" y="732" width="3.8" height="3.8" stroke-width="1"/><path d="M1149 726.8 H1152.2 V729.6" stroke-width="1.1"/><path d="M1150.6 728.8 H1153.8 L1152.2 730.8 Z" fill="#2565b8" stroke="none"/><path d="M1144.6 732.6 V735.4 H1147.6" stroke-width="1.1"/><path d="M1143 733.4 H1146.2 L1144.6 731.4 Z" fill="#2565b8" stroke="none"/>
</g>
</svg>

</div>
</body></html>
